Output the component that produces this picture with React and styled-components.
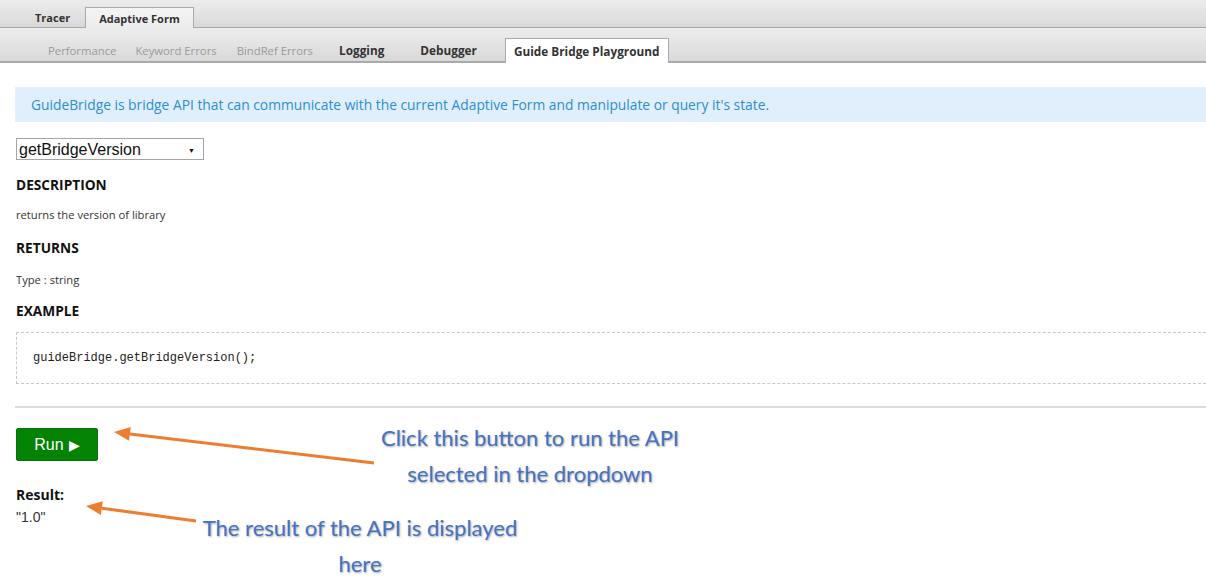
import React from 'react'
import styled, { createGlobalStyle } from 'styled-components'

const GlobalStyle = createGlobalStyle`
  html, body {
    margin: 0;
    padding: 0;
    background: #fff;
  }
  body {
    font-family: "Open Sans", "Noto Sans", sans-serif;
    color: #222;
  }
`

const Page = styled.div`
  position: relative;
  width: 1206px;
  height: 584px;
  overflow: hidden;
`

const TopBar = styled.div`
  display: flex;
  align-items: flex-end;
  height: 27px;
  padding-left: 20px;
  background: linear-gradient(#ececec, #d9d9d9);
  border-bottom: 1px solid #a9a9a9;
`

const TopTab = styled.div`
  display: flex;
  align-items: center;
  justify-content: center;
  height: ${p => (p.active ? '20px' : '19px')};
  padding: 0 ${p => (p.active ? '13px' : '15px')};
  margin-bottom: ${p => (p.active ? '-1px' : '0')};
  font-size: 11px;
  font-weight: 700;
  color: #333;
  background: ${p => (p.active ? 'linear-gradient(#f4f4f4, #ececec)' : 'transparent')};
  border: ${p => (p.active ? '1px solid #a9a9a9' : 'none')};
  border-bottom: none;
`

const SubBar = styled.div`
  display: flex;
  align-items: flex-end;
  height: 33px;
  padding-left: 48px;
  background: linear-gradient(#ededed, #d9d9d9);
  border-bottom: 2px solid #a9a9a9;
`

const SubTab = styled.div`
  display: flex;
  align-items: center;
  height: ${p => (p.active ? '24px' : '22px')};
  padding: 0 ${p => (p.active ? '8px' : '0')};
  margin-right: ${p => p.gap || 0}px;
  margin-bottom: ${p => (p.active ? '-2px' : '0')};
  font-size: ${p => (p.bold ? '11.8px' : '11.3px')};
  font-weight: ${p => (p.bold ? 700 : 400)};
  color: ${p => (p.bold ? '#333' : '#9a9a9a')};
  background: ${p => (p.active ? '#fff' : 'transparent')};
  border: ${p => (p.active ? '1px solid #a9a9a9' : 'none')};
  border-bottom: none;
`

const Content = styled.div`
  display: flex;
  flex-direction: column;
  padding: 24px 0 0 15px;
`

const Banner = styled.div`
  display: flex;
  align-items: center;
  height: 35px;
  padding-left: 16px;
  background: #e1eefc;
  color: #2b8fd2;
  font-size: 13.8px;
`

const Select = styled.div`
  display: flex;
  align-items: center;
  justify-content: space-between;
  width: 176px;
  height: 18px;
  margin: 16px 0 0 1px;
  padding: 2px 8px 0 2px;
  border: 1px solid #a5a5a5;
  font-family: "Liberation Sans", Arial, sans-serif;
  font-size: 16px;
  color: #111;
`

const Caret = styled.span`
  font-size: 7px;
  color: #111;
`

const Heading = styled.div`
  margin: ${p => p.top}px 0 0 1px;
  font-size: 13.7px;
  font-weight: 700;
  color: #111;
  line-height: 18px;
`

const SmallText = styled.div`
  margin: ${p => p.top}px 0 0 1px;
  font-size: 11.2px;
  color: #333;
  line-height: 14px;
`

const CodeBox = styled.div`
  display: flex;
  align-items: center;
  height: 50px;
  margin: 12px 0 0 1px;
  padding-left: 16px;
  border: 1px dashed #c8c8c8;
  border-right: none;
  font-family: "Liberation Mono", "DejaVu Sans Mono", monospace;
  font-size: 12px;
  color: #222;
`

const Rule = styled.div`
  height: 0;
  margin-top: 22px;
  border-top: 2px solid #dcdcdc;
`

const RunButton = styled.button`
  display: flex;
  align-items: center;
  justify-content: center;
  gap: 5px;
  width: 82px;
  height: 33px;
  margin: 20px 0 0 1px;
  padding: 0;
  background: #038203;
  border: 1px solid #0a700a;
  border-radius: 2px;
  color: #fff;
  font-family: "Liberation Sans", Arial, sans-serif;
  font-size: 16px;
  cursor: pointer;
`

const PlayMark = styled.span`
  font-size: 14px;
`

const ResultLabel = styled.div`
  margin: 25px 0 0 1px;
  font-size: 14px;
  font-weight: 700;
  color: #111;
  line-height: 18px;
`

const ResultValue = styled.div`
  margin: 3px 0 0 1px;
  font-family: "Liberation Sans", Arial, sans-serif;
  font-size: 14px;
  color: #333;
  line-height: 20px;
`

const Callout = styled.div`
  position: absolute;
  left: ${p => p.x}px;
  top: ${p => p.y}px;
  width: ${p => p.w}px;
  text-align: center;
  font-family: Lato, "Open Sans", sans-serif;
  font-size: 22px;
  line-height: 36px;
  color: #4472c4;
  text-shadow: 1px 1px 2px rgba(0, 0, 0, 0.35);
`

const Overlay = styled.svg`
  position: absolute;
  left: 0;
  top: 0;
  pointer-events: none;
`

const Arrow = ({ x1, y1, x2, y2 }) => {
  const ang = Math.atan2(y2 - y1, x2 - x1)
  const len = 16
  const half = 7
  const bx = x2 - len * Math.cos(ang)
  const by = y2 - len * Math.sin(ang)
  const px = -Math.sin(ang) * half
  const py = Math.cos(ang) * half
  return (
    <g>
      <line x1={x1} y1={y1} x2={bx} y2={by} stroke="#ed7d31" strokeWidth="3" />
      <polygon
        points={`${x2},${y2} ${bx + px},${by + py} ${bx - px},${by - py}`}
        fill="#ed7d31"
      />
    </g>
  )
}

export default function App() {
  return (
    <Page>
      <GlobalStyle />
      <TopBar>
        <TopTab>Tracer</TopTab>
        <TopTab active>Adaptive Form</TopTab>
      </TopBar>
      <SubBar>
        <SubTab gap={19}>Performance</SubTab>
        <SubTab gap={20}>Keyword Errors</SubTab>
        <SubTab gap={26}>BindRef Errors</SubTab>
        <SubTab bold gap={36}>Logging</SubTab>
        <SubTab bold gap={28}>Debugger</SubTab>
        <SubTab bold active>Guide Bridge Playground</SubTab>
      </SubBar>

      <Content>
        <Banner>
          GuideBridge is bridge API that can communicate with the current Adaptive Form and manipulate or query it's state.
        </Banner>
        <Select>
          getBridgeVersion
          <Caret>▼</Caret>
        </Select>
        <Heading top={16}>DESCRIPTION</Heading>
        <SmallText top={14}>returns the version of library</SmallText>
        <Heading top={17}>RETURNS</Heading>
        <SmallText top={16}>Type : string</SmallText>
        <Heading top={15}>EXAMPLE</Heading>
        <CodeBox>guideBridge.getBridgeVersion();</CodeBox>
        <Rule />
        <RunButton>Run <PlayMark>▶</PlayMark></RunButton>
        <ResultLabel>Result:</ResultLabel>
        <ResultValue>"1.0"</ResultValue>
      </Content>

      <Overlay width="1206" height="584">
        <Arrow x1={374} y1={463} x2={114} y2={432} />
        <Arrow x1={196} y1={521} x2={86} y2={506} />
      </Overlay>
      <Callout x={330} y={420} w={400}>
        Click this button to run the API<br />selected in the dropdown
      </Callout>
      <Callout x={160} y={510} w={400}>
        The result of the API is displayed<br />here
      </Callout>
    </Page>
  )
}
